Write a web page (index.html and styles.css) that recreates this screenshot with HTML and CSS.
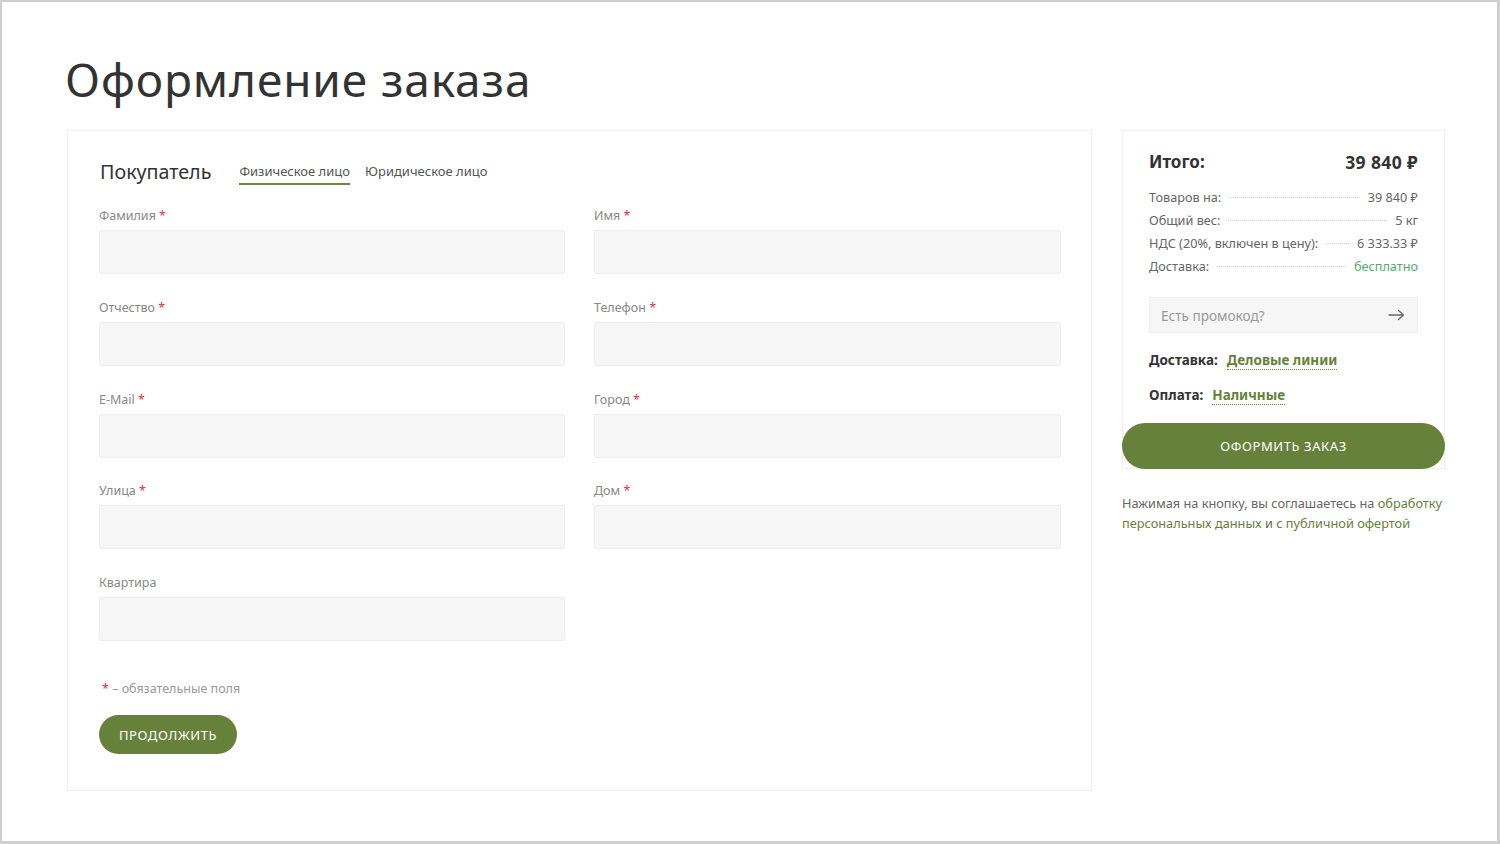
FILE: index.html
```html
<!DOCTYPE html>
<html lang="ru">
<head>
<meta charset="utf-8">
<title>Оформление заказа</title>
<link rel="stylesheet" href="styles.css">
</head>
<body>
<div class="frame">
  <h1 class="page-title">Оформление заказа</h1>
  <div class="layout">
    <section class="card form-card">
      <div class="buyer-head">
        <h2 class="buyer-title">Покупатель</h2>
        <div class="tabs">
          <span class="tab active">Физическое лицо</span>
          <span class="tab">Юридическое лицо</span>
        </div>
      </div>
      <div class="fields">
        <div class="field"><label>Фамилия <span class="req">*</span></label><div class="input"></div></div>
        <div class="field"><label>Имя <span class="req">*</span></label><div class="input"></div></div>
        <div class="field"><label>Отчество <span class="req">*</span></label><div class="input"></div></div>
        <div class="field"><label>Телефон <span class="req">*</span></label><div class="input"></div></div>
        <div class="field"><label>E-Mail <span class="req">*</span></label><div class="input"></div></div>
        <div class="field"><label>Город <span class="req">*</span></label><div class="input"></div></div>
        <div class="field"><label>Улица <span class="req">*</span></label><div class="input"></div></div>
        <div class="field"><label>Дом <span class="req">*</span></label><div class="input"></div></div>
        <div class="field"><label>Квартира</label><div class="input"></div></div>
      </div>
      <p class="note"><span class="req">*</span> – обязательные поля</p>
      <button class="btn btn-continue">ПРОДОЛЖИТЬ</button>
    </section>
    <aside class="side">
      <div class="card summary">
        <div class="summary-body">
          <div class="total"><span>Итого:</span><span>39 840 ₽</span></div>
          <ul class="rows">
            <li><span class="k">Товаров на:</span><span class="dots"></span><span class="v">39 840 ₽</span></li>
            <li><span class="k">Общий вес:</span><span class="dots"></span><span class="v">5 кг</span></li>
            <li><span class="k">НДС (20%, включен в цену):</span><span class="dots"></span><span class="v">6 333.33 ₽</span></li>
            <li><span class="k">Доставка:</span><span class="dots"></span><span class="v free">бесплатно</span></li>
          </ul>
          <div class="promo">
            <span class="promo-ph">Есть промокод?</span>
            <svg class="promo-arrow" width="17" height="12" viewBox="0 0 17 12"><path d="M1 6h14.5M10.5 1.5L15.5 6l-5 4.5" fill="none" stroke="#666" stroke-width="1.3" stroke-linecap="round" stroke-linejoin="round"/></svg>
          </div>
          <div class="choice"><b>Доставка:</b><a class="dlink">Деловые линии</a></div>
          <div class="choice"><b>Оплата:</b><a class="dlink">Наличные</a></div>
        </div>
        <button class="btn btn-order">ОФОРМИТЬ ЗАКАЗ</button>
      </div>
      <p class="agree">Нажимая на кнопку, вы соглашаетесь на <a>обработку</a><br><a>персональных данных</a> и <a>с публичной офертой</a></p>
    </aside>
  </div>
</div>
</body>
</html>
```
FILE: styles.css
```css
* { box-sizing: border-box; }
html, body { margin: 0; padding: 0; background: #fff; }
body {
  font-family: "Noto Sans", "Open Sans", sans-serif;
  color: #333;
}
.frame {
  width: 1500px;
  height: 844px;
  border-style: solid;
  border-color: #cfcfcf;
  border-width: 2px 3px 3px 2px;
  padding: 0 0 0 63px;
  overflow: hidden;
}
.page-title {
  margin: 49px 0 23px;
  font-weight: 400;
  font-size: 46px;
  line-height: 56px;
  color: #333;
  letter-spacing: 0.9px;
}
.layout {
  display: flex;
  gap: 30px;
  align-items: flex-start;
}
.card {
  border: 1px solid #efefef;
  background: #fff;
}
.form-card {
  width: 1025px;
  margin-left: 2px;
  padding: 29px 29px 36px 31px;
}
.buyer-head {
  display: flex;
  align-items: flex-start;
  gap: 28px;
  margin-bottom: 22px;
}
.buyer-title {
  margin: 0 0 0 1px;
  font-size: 19.7px;
  font-weight: 400;
  line-height: 24px;
  color: #333;
}
.tabs { display: flex; gap: 15px; margin-top: 3px; }
.tab {
  font-size: 13px;
  line-height: 16px;
  color: #555;
  padding-bottom: 4px;
  border-bottom: 2px solid transparent;
}
.tab.active { border-bottom-color: #6a8a3a; }
.fields {
  display: grid;
  grid-template-columns: 466px 467px;
  column-gap: 29px;
  row-gap: 24.75px;
}
.field label {
  display: block;
  font-size: 12.5px;
  line-height: 16px;
  color: #888;
  margin: 1px 0 6px;
}
.req { color: #e0323c; }
.input {
  height: 44px;
  background: #f6f6f6;
  border: 1px solid #ededed;
  border-radius: 2px;
}
.note {
  margin: 40px 0 18px 3px;
  font-size: 12.5px;
  color: #999;
  line-height: 16px;
}
.btn {
  display: block;
  border: 0;
  background: #66823a;
  color: #fff;
  font-family: inherit;
  letter-spacing: 0.6px;
  cursor: pointer;
}
.btn-continue {
  width: 138px;
  height: 39px;
  border-radius: 20px;
  font-size: 13px;
}
.side { width: 323px; }
.summary { padding: 0; }
.summary-body { padding: 20px 26px 19px 26px; }
.total {
  display: flex;
  justify-content: space-between;
  font-weight: 700;
  font-size: 17px;
  line-height: 22px;
  color: #333;
}
.total span:last-child { font-size: 17.5px; letter-spacing: 0.4px; }
.rows {
  list-style: none;
  margin: 12.5px 0 0;
  padding: 0;
}
.rows li {
  display: flex;
  align-items: baseline;
  font-size: 12.7px;
  line-height: 23px;
  color: #666;
}
.dots {
  flex: 1;
  margin: 0 8px;
  border-bottom: 1px dotted #d0d0d0;
  transform: translateY(-4px);
}
.free { color: #4fae6c; }
.promo {
  margin-top: 19.5px;
  height: 36px;
  background: #f6f6f6;
  border: 1px solid #efefef;
  display: flex;
  align-items: center;
  justify-content: space-between;
  padding: 0 12px 0 11px;
}
.promo-ph { font-size: 13.6px; color: #999; }
.choice {
  margin-top: 18px;
  font-size: 13.5px;
  line-height: 18px;
  color: #333;
}
.choice + .choice { margin-top: 17px; }
.choice b { font-weight: 700; margin-right: 9px; }
.dlink {
  color: #66823a;
  font-weight: 700;
  border-bottom: 1px dotted #66823a;
}
.btn-order {
  width: calc(100% + 2px);
  margin: 0 -1px -1px;
  height: 46px;
  border-radius: 23px;
  font-size: 13px;
}
.agree {
  margin: 24px 0 0;
  font-size: 12.75px;
  line-height: 20px;
  color: #666;
}
.agree a { color: #66823a; }
```
